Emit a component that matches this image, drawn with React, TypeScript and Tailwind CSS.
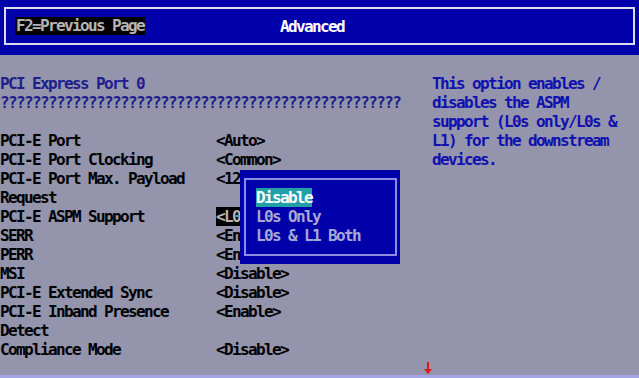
const rows: { label: string; value?: string; selected?: boolean }[] = [
  { label: "PCI-E Port", value: "<Auto>" },
  { label: "PCI-E Port Clocking", value: "<Common>" },
  { label: "PCI-E Port Max. Payload", value: "<12" },
  { label: "Request" },
  { label: "PCI-E ASPM Support", value: "<L0", selected: true },
  { label: "SERR", value: "<En" },
  { label: "PERR", value: "<En" },
  { label: "MSI", value: "<Disable>" },
  { label: "PCI-E Extended Sync", value: "<Disable>" },
  { label: "PCI-E Inband Presence", value: "<Enable>" },
  { label: "Detect" },
  { label: "Compliance Mode", value: "<Disable>" },
];

const help = [
  "This option enables /",
  "disables the ASPM",
  "support (L0s only/L0s &",
  "L1) for the downstream",
  "devices.",
];

const options = ["Disable", "L0s Only", "L0s & L1 Both"];

export default function App() {
  return (
    <div
      className="relative w-[639px] h-[378px] overflow-hidden bg-[#9494ac] text-[16px] leading-[19px] tracking-[-1.63px] font-bold whitespace-pre"
      style={{ fontFamily: '"DejaVu Sans Mono", "Liberation Mono", monospace' }}
    >
      {/* Header */}
      <div className="h-[55px] bg-[#0000aa] pt-[7px] px-[4px]">
        <div className="h-[38px] border-2 border-[#dcdcec] flex items-center pl-[9px]">
          <span className="bg-black text-[#b4b4b4] h-[18px] leading-[18px] px-px">F2=Previous Page</span>
          <span className="ml-[135px] text-white">Advanced</span>
        </div>
      </div>

      {/* Body */}
      <div className="h-[320px] flex pt-[19px]">
        <div className="w-[432px] shrink-0">
          <div className="h-[19px] text-[#1e1e8e]">PCI Express Port 0</div>
          <div className="h-[19px] text-[#1e1e8e]">{"?".repeat(50)}</div>
          <div className="h-[19px]" />
          {rows.map((r) => (
            <div key={r.label} className="h-[19px] flex text-black">
              <div className="w-[216px] shrink-0">{r.label}</div>
              {r.value && (
                <div className={r.selected ? "bg-black text-[#b4b4b4]" : ""}>{r.value}</div>
              )}
            </div>
          ))}
          <div className="h-[19px] pl-[424px] pt-[3px]">
            <svg width="8" height="12" viewBox="0 0 8 12">
              <rect x="3" y="0" width="2" height="8" fill="#e01818" />
              <path d="M0 7 H8 L4 12 Z" fill="#e01818" />
            </svg>
          </div>
        </div>
        <div className="flex-1 text-[#1010b0]">
          {help.map((l) => (
            <div key={l} className="h-[19px]">{l}</div>
          ))}
        </div>
      </div>
      <div className="h-[3px] bg-[#a4a4e4]" />

      {/* Popup */}
      <div className="absolute left-[240px] top-[170px] w-[160px] h-[94px] bg-[#0000aa] pt-[18px] pl-[16px]">
        <div className="absolute left-[4px] right-[3px] top-[8px] bottom-[8px] border-2 border-[#8c8ce0]" />
        {options.map((o, i) => (
          <div key={o} className="relative h-[19px]">
            <span className={i === 0 ? "bg-[#22a0a8] text-white" : "text-[#a8a8d4]"}>{o}</span>
          </div>
        ))}
      </div>
    </div>
  );
}
